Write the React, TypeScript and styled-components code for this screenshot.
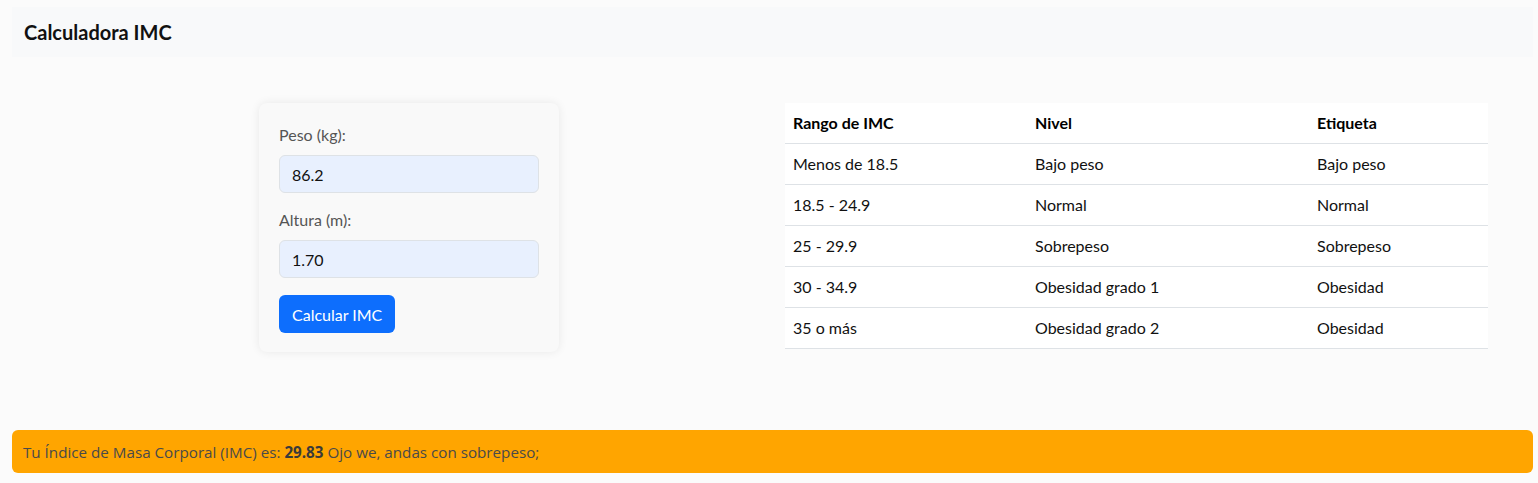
import React from "react";
import styled, { createGlobalStyle } from "styled-components";

const GlobalStyle = createGlobalStyle`
  html, body {
    margin: 0;
    padding: 0;
    background: #fbfbfb;
    font-family: "Segoe UI", Lato, "Noto Sans", sans-serif;
    color: #212529;
  }
  * { box-sizing: border-box; }
`;

const Page = styled.div`
  padding: 7px 5px 10px 12px;
  display: flex;
  flex-direction: column;
`;

const Header = styled.header`
  height: 50px;
  background: #f8f9fa;
  display: flex;
  align-items: center;
  padding: 0 12px;
`;

const Title = styled.h1`
  margin: 0;
  font-size: 20px;
  font-weight: 700;
  color: #111;
`;

const Content = styled.main`
  display: flex;
  align-items: flex-start;
  padding-left: 247px;
  margin-top: 46px;
  gap: 226px;
`;

const Card = styled.form`
  width: 300px;
  background: #f9f9f9;
  border-radius: 8px;
  box-shadow: 0 0 10px rgba(0, 0, 0, 0.08);
  padding: 21px 20px 19px;
  display: flex;
  flex-direction: column;
  align-items: flex-start;
`;

const Label = styled.label`
  font-size: 16px;
  color: #555;
  line-height: 22px;
  margin-bottom: 9px;
`;

const Input = styled.input`
  width: 260px;
  height: 38px;
  border: 1px solid #dee2e6;
  border-radius: 6px;
  background: #e8f0fe;
  padding: 0 12px;
  font-family: inherit;
  font-size: 16px;
  color: #111;
  margin-bottom: 16px;
  outline: none;
`;

const Button = styled.button`
  height: 38px;
  padding: 0 13px;
  border: none;
  border-radius: 6px;
  background: #0d6efd;
  color: #fff;
  font-family: inherit;
  font-size: 16px;
  margin-top: 1px;
`;

const Table = styled.table`
  width: 703px;
  border-collapse: collapse;
  background: #fff;
  font-size: 16px;
`;

const Th = styled.th<{ $w?: number }>`
  text-align: left;
  font-weight: 700;
  padding: 0 8px;
  height: 40px;
  border-bottom: 1px solid #dee2e6;
  width: ${(p) => (p.$w ? `${p.$w}px` : "auto")};
  color: #000;
`;

const Td = styled.td`
  padding: 0 8px;
  height: 41px;
  border-bottom: 1px solid #dee2e6;
  color: #111;
`;

const Alert = styled.div`
  margin-top: 78px;
  height: 43px;
  border-radius: 6px;
  background: #ffa500;
  display: flex;
  align-items: center;
  padding: 0 11px;
  font-family: "Open Sans", sans-serif;
  font-size: 15.2px;
  color: #4a4a4a;
  strong { font-weight: 700; color: #3a3a3a; margin-right: 4px; }
`;

const rows = [
  ["Menos de 18.5", "Bajo peso", "Bajo peso"],
  ["18.5 - 24.9", "Normal", "Normal"],
  ["25 - 29.9", "Sobrepeso", "Sobrepeso"],
  ["30 - 34.9", "Obesidad grado 1", "Obesidad"],
  ["35 o más", "Obesidad grado 2", "Obesidad"],
];

export default function App() {
  return (
    <>
      <GlobalStyle />
      <Page>
        <Header>
          <Title>Calculadora IMC</Title>
        </Header>
        <Content>
          <Card onSubmit={(e) => e.preventDefault()}>
            <Label>Peso (kg):</Label>
            <Input defaultValue="86.2" />
            <Label>Altura (m):</Label>
            <Input defaultValue="1.70" />
            <Button type="submit">Calcular IMC</Button>
          </Card>
          <Table>
            <thead>
              <tr>
                <Th $w={242}>Rango de IMC</Th>
                <Th $w={282}>Nivel</Th>
                <Th>Etiqueta</Th>
              </tr>
            </thead>
            <tbody>
              {rows.map((r) => (
                <tr key={r[0]}>
                  <Td>{r[0]}</Td>
                  <Td>{r[1]}</Td>
                  <Td>{r[2]}</Td>
                </tr>
              ))}
            </tbody>
          </Table>
        </Content>
        <Alert>
          Tu Índice de Masa Corporal (IMC) es:&nbsp;<strong>29.83</strong> Ojo we, andas con sobrepeso;
        </Alert>
      </Page>
    </>
  );
}
